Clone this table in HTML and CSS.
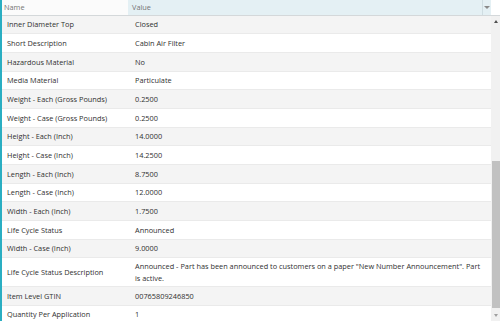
FILE: index.html
```html
<!DOCTYPE html>
<html>
<head>
<meta charset="utf-8">
<link rel="stylesheet" href="styles.css">
</head>
<body>
<div class="grid">
  <div class="head">
    <div class="hcell hname">Name</div>
    <div class="hcell hvalue"><span>Value</span><span class="drop"><span class="tri-down"></span></span></div>
    <div class="hgap"></div>
  </div>
  <div class="main">
    <div class="rows">
      <div class="row"><div class="k">Inner Diameter Top</div><div class="v">Closed</div></div>
      <div class="row"><div class="k">Short Description</div><div class="v">Cabin Air Filter</div></div>
      <div class="row"><div class="k">Hazardous Material</div><div class="v">No</div></div>
      <div class="row"><div class="k">Media Material</div><div class="v">Particulate</div></div>
      <div class="row"><div class="k">Weight - Each (Gross Pounds)</div><div class="v">0.2500</div></div>
      <div class="row"><div class="k">Weight - Case (Gross Pounds)</div><div class="v">0.2500</div></div>
      <div class="row"><div class="k">Height - Each (Inch)</div><div class="v">14.0000</div></div>
      <div class="row"><div class="k">Height - Case (Inch)</div><div class="v">14.2500</div></div>
      <div class="row"><div class="k">Length - Each (Inch)</div><div class="v">8.7500</div></div>
      <div class="row"><div class="k">Length - Case (Inch)</div><div class="v">12.0000</div></div>
      <div class="row"><div class="k">Width - Each (Inch)</div><div class="v">1.7500</div></div>
      <div class="row"><div class="k">Life Cycle Status</div><div class="v">Announced</div></div>
      <div class="row"><div class="k">Width - Case (Inch)</div><div class="v">9.0000</div></div>
      <div class="row"><div class="k">Life Cycle Status Description</div><div class="v">Announced - Part has been announced to customers on a paper "New Number Announcement". Part is active.</div></div>
      <div class="row"><div class="k">Item Level GTIN</div><div class="v">00765809246850</div></div>
      <div class="row"><div class="k">Quantity Per Application</div><div class="v">1</div></div>
    </div>
    <div class="sbar">
      <div class="sarrow"><span class="tri-up"></span></div>
      <div class="strack"><div class="sthumb"></div></div>
      <div class="sarrow"><span class="tri-down small"></span></div>
    </div>
  </div>
</div>
</body>
</html>
```

FILE: styles.css
```css
html, body {
  margin: 0;
  padding: 0;
  width: 500px;
  height: 321px;
  overflow: hidden;
  background: #ffffff;
}
.grid {
  display: flex;
  flex-direction: column;
  height: 321px;
  border-left: 2px solid #2aaec2;
  font-family: "Open Sans", "Liberation Sans", sans-serif;
  font-size: 7.35px;
  color: #303030;
}
.head {
  display: flex;
  height: 15.7px;
  box-sizing: border-box;
  border-bottom: 1px solid #d4d8da;
  flex: none;
}
.hcell {
  display: flex;
  align-items: center;
  color: #757575;
}
.hname {
  width: 126px;
  padding-left: 2px;
  box-sizing: border-box;
  background: #fbfbfb;
}
.hvalue {
  flex: 1;
  padding-left: 4px;
  background: #e4f0f4;
  justify-content: space-between;
}
.drop {
  width: 8px;
  height: 100%;
  border-left: 1px solid #cfdde2;
  display: flex;
  align-items: center;
  justify-content: center;
}
.hgap {
  width: 9px;
  background: #ffffff;
}
.main {
  flex: 1;
  display: flex;
  min-height: 0;
}
.rows {
  flex: 1;
  overflow: hidden;
}
.row {
  display: flex;
  align-items: center;
  min-height: 18.67px;
  box-sizing: border-box;
  padding: 1.6px 0;
  line-height: 12.3px;
  border-bottom: 1px solid #eaeaea;
}
.row:nth-child(odd) {
  background: #f4f4f4;
}
.row:nth-child(even) {
  background: #ffffff;
}
.k {
  width: 126px;
  flex: none;
  padding-left: 5px;
  box-sizing: border-box;
}
.v {
  flex: 1;
  padding-left: 7px;
  padding-right: 4px;
}
.sbar {
  width: 9px;
  display: flex;
  flex-direction: column;
  background: #f1f1f1;
}
.sarrow {
  height: 11px;
  display: flex;
  align-items: center;
  justify-content: center;
  flex: none;
}
.strack {
  flex: 1;
  position: relative;
}
.sthumb {
  position: absolute;
  left: 1px;
  right: 0;
  top: 134px;
  bottom: 2px;
  background: #c1c1c1;
}
.tri-down {
  width: 0;
  height: 0;
  border-left: 3px solid transparent;
  border-right: 3px solid transparent;
  border-top: 3px solid #8a8a8a;
}
.tri-up {
  width: 0;
  height: 0;
  border-left: 2.5px solid transparent;
  border-right: 2.5px solid transparent;
  border-bottom: 3px solid #505050;
}
.tri-down.small {
  border-left-width: 2.5px;
  border-right-width: 2.5px;
  border-top-color: #a0a0a0;
}
```
